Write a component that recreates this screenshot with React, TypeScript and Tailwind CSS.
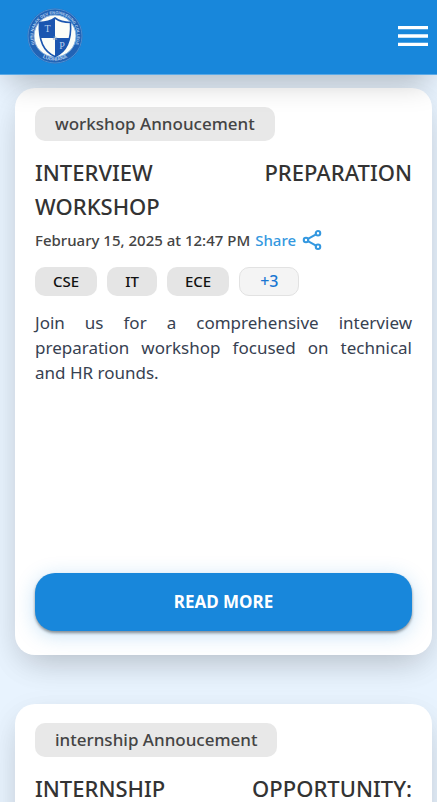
import { IoShareSocialOutline } from "react-icons/io5";
import { MdMenu } from "react-icons/md";

type Announcement = {
  id: string;
  kind: string;
  title: string;
  titleFills?: boolean;
  date: string;
  branches: string[];
  more: number;
  body: string;
};

const announcements: Announcement[] = [
  {
    id: "workshop",
    kind: "workshop Annoucement",
    title: "INTERVIEW PREPARATION WORKSHOP",
    date: "February 15, 2025 at 12:47 PM",
    branches: ["CSE", "IT", "ECE"],
    more: 3,
    body: "Join us for a comprehensive interview preparation workshop focused on technical and HR rounds.",
  },
  {
    id: "internship",
    kind: "internship Annoucement",
    title: "INTERNSHIP OPPORTUNITY:",
    titleFills: true,
    date: "",
    branches: [],
    more: 0,
    body: "",
  },
];

function Logo() {
  return (
    <svg viewBox="0 0 56 56" className="size-14" role="img" aria-label="Training and Placement, Ludhiana">
      <defs>
        <path id="ring-top" d="M 8.5 38 A 22 22 0 1 1 47.5 38" />
        <path id="ring-bottom" d="M 9 44 A 25 25 0 0 0 47 44" />
        <clipPath id="shield">
          <path d="M28 10 C24 13 18 14.5 12.5 14.5 C11.5 30 15 43 28 48.5 C41 43 44.5 30 43.5 14.5 C38 14.5 32 13 28 10 Z" />
        </clipPath>
      </defs>
      <circle cx="28" cy="28" r="27.5" fill="#2263b5" />
      <circle cx="28" cy="28" r="27" fill="none" stroke="#4d8fd2" strokeWidth="1" />
      <circle cx="28" cy="28" r="21" fill="#fbfdf8" stroke="#8db6e2" strokeWidth="1" />
      <g fill="#b3cff0" fontFamily="'Liberation Sans', sans-serif" fontWeight="700">
        <text fontSize="4">
          <textPath href="#ring-top" startOffset="50%" textAnchor="middle">
            GURU NANAK DEV ENGINEERING COLLEGE
          </textPath>
        </text>
        <text fontSize="5">
          <textPath href="#ring-bottom" startOffset="50%" textAnchor="middle">
            LUDHIANA
          </textPath>
        </text>
      </g>
      <g clipPath="url(#shield)">
        <rect x="10" y="8" width="36" height="42" fill="#fbfdf8" />
        <rect x="10" y="8" width="18" height="22" fill="#1b56b0" />
        <rect x="28" y="30" width="18" height="21" fill="#1b56b0" />
      </g>
      <path
        d="M28 10 C24 13 18 14.5 12.5 14.5 C11.5 30 15 43 28 48.5 C41 43 44.5 30 43.5 14.5 C38 14.5 32 13 28 10 Z"
        fill="none"
        stroke="#1b56b0"
        strokeWidth="1.6"
      />
      <g fontFamily="'Liberation Serif', serif" textAnchor="middle" fill="#b8d0ee">
        <text x="20.5" y="24" fontSize="10">T</text>
        <text x="35" y="41" fontSize="10">P</text>
        <text x="28" y="32" fontSize="6" fill="#7d9fc4">&amp;</text>
      </g>
    </svg>
  );
}

function Card({ item }: { item: Announcement }) {
  return (
    <article className="flex min-h-[567px] flex-col items-start rounded-[20px] bg-white px-5 pt-[19px] pb-6 shadow-[0_10px_30px_rgba(0,0,0,0.08),0_14px_36px_-12px_rgba(0,0,0,0.18)]">
      <span className="rounded-[10px] bg-[#e8e8e8] px-5 py-1 text-[17px] leading-[26px] font-medium text-[#444]">
        {item.kind}
      </span>
      <h2
        className={`mt-[14px] w-full text-justify text-[22px] leading-[34px] font-medium text-[#333] ${
          item.titleFills ? "[text-align-last:justify]" : ""
        }`}
      >
        {item.title}
      </h2>
      {item.date && (
        <div className="mt-[5px] flex h-6 items-center text-[15px] leading-6">
          <time className="font-medium text-[#444]">{item.date}</time>
          <button type="button" className="ml-[5px] flex items-center gap-1 font-medium text-[#3498e0]">
            Share
            <IoShareSocialOutline className="size-6 [&_*]:stroke-[44px]" />
          </button>
        </div>
      )}
      {item.branches.length > 0 && (
        <ul className="mt-[15px] flex gap-[10px] text-[15px] leading-[21px] font-medium text-[#111]">
          {item.branches.map((b) => (
            <li key={b} className="rounded-[10px] bg-[#e5e5e5] px-[18px] py-1">
              {b}
            </li>
          ))}
          <li>
            <button
              type="button"
              className="rounded-[10px] border border-[#e2e2e2] bg-[#f4f4f4] px-5 py-[3px] text-base leading-[21px] font-medium text-[#1976d2]"
            >
              +{item.more}
            </button>
          </li>
        </ul>
      )}
      {item.body && (
        <p className="mt-[14px] text-justify text-[17px] leading-[25px] text-[#374151]">{item.body}</p>
      )}
      <button
        type="button"
        className="mt-auto h-[58px] w-full rounded-[20px] bg-[#1887db] text-[17px] font-bold text-white shadow-[0_2px_3px_rgba(0,0,0,0.4),0_4px_20px_rgba(24,135,219,0.25)]"
      >
        READ MORE
      </button>
    </article>
  );
}

export default function App() {
  return (
    <div className="flex h-screen flex-col overflow-hidden bg-[#e8f3fe] font-['Noto_Sans','Open_Sans',sans-serif]">
      <header className="relative z-10 flex shrink-0 items-center justify-between border-b border-[#5aa9e6] bg-[#1887db] pt-2 pr-1 pb-[10px] pl-[27px] shadow-[0_14px_30px_-8px_rgba(0,0,0,0.25)]">
        <a href="#home" aria-label="Home">
          <Logo />
        </a>
        <button type="button" aria-label="Open menu" className="text-white">
          <MdMenu className="size-10" />
        </button>
      </header>
      <main className="flex min-h-0 flex-1 flex-col gap-[49px] overflow-y-auto pt-[13px] pr-[5px] pl-[15px] [scrollbar-width:none] *:shrink-0">
        {announcements.map((item) => (
          <Card key={item.id} item={item} />
        ))}
      </main>
    </div>
  );
}
